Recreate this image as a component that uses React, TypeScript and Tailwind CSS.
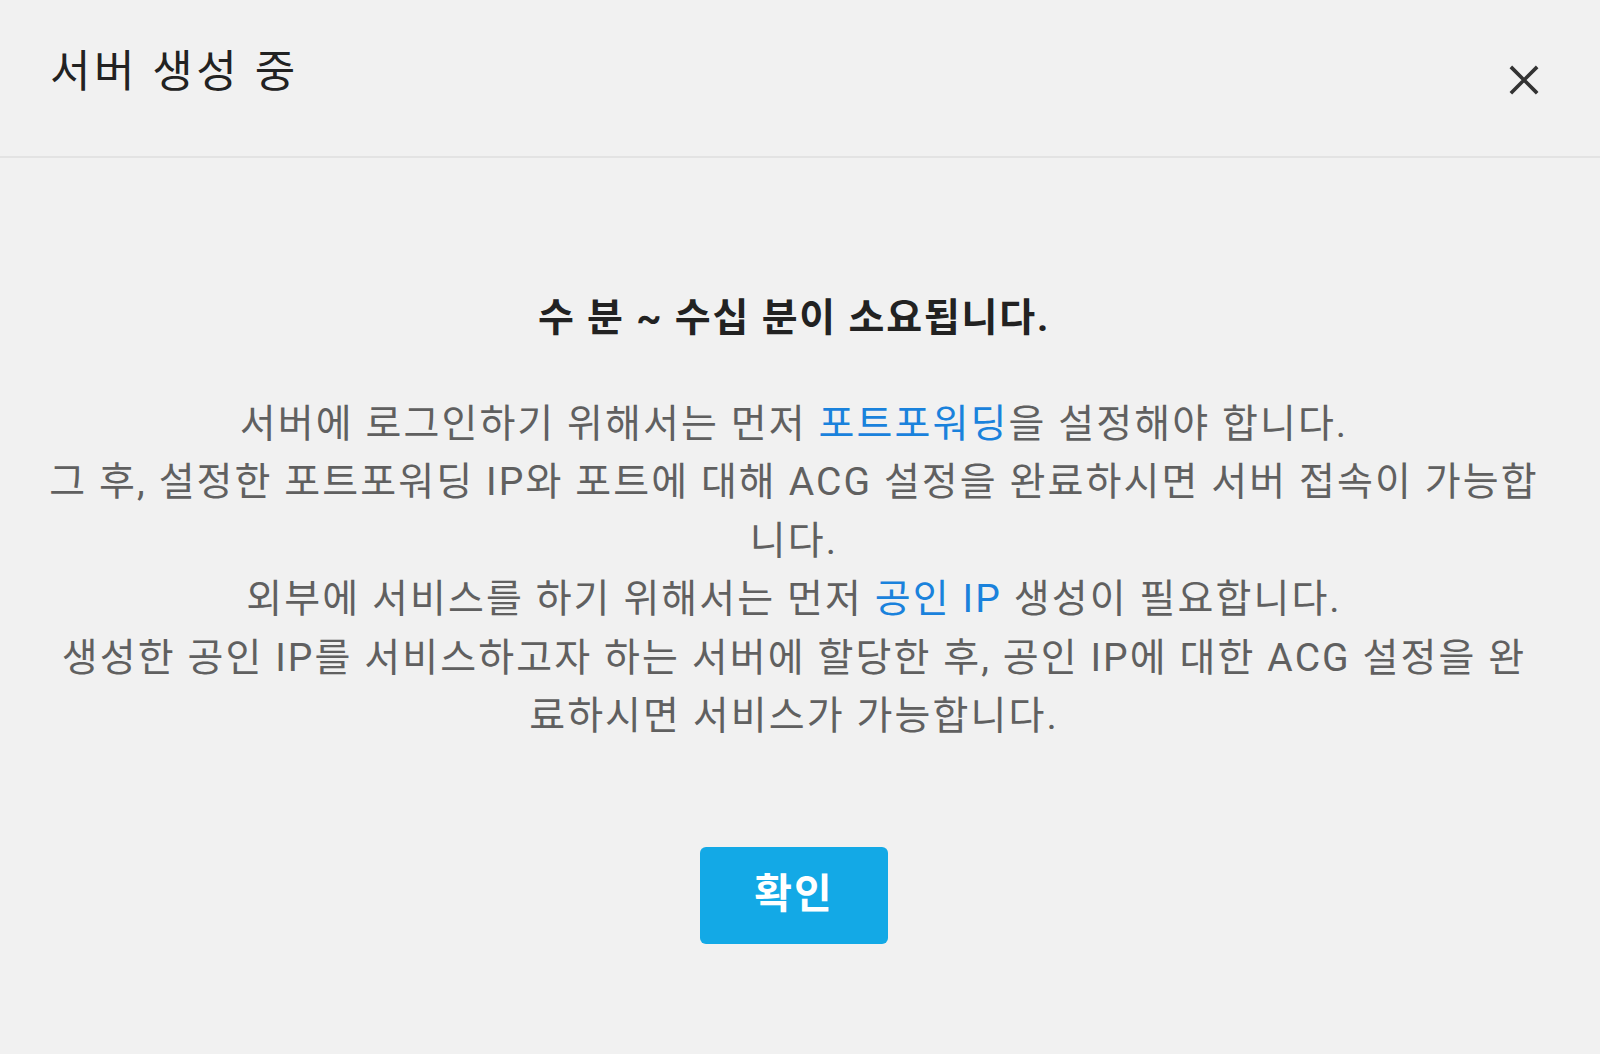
export default function App() {
  const font = { fontFamily: 'Roboto, "Noto Sans CJK KR", sans-serif' };
  return (
    <div className="min-h-[1054px] w-full bg-[#f1f1f1] text-[#555]" style={font}>
      <div className="flex h-[158px] items-start justify-between border-b-2 border-[#e3e3e3] pl-[50px] pr-[60px]">
        <h1 className="mt-[44px] text-[44px] leading-[56px] font-normal tracking-[3.5px] text-[#222]">서버 생성 중</h1>
        <button className="mt-[60px] h-[40px] w-[40px] -mr-[4px] flex items-center justify-center text-[#333]">
          <svg width="38" height="38" viewBox="0 0 24 24" fill="none" stroke="currentColor" strokeWidth="2.3" strokeLinecap="square">
            <path d="M4.5 4.5l15 15M19.5 4.5l-15 15" />
          </svg>
        </button>
      </div>
      <div className="flex flex-col items-center pl-[44px] pr-[56px] pt-[131px]">
        <p className="text-[39px] leading-[58.5px] font-bold tracking-[1.8px] text-[#222]">수 분 ~ 수십 분이 소요됩니다.</p>
        <div className="mt-[47px] text-center text-[39px] leading-[58.5px] tracking-[2.1px] text-[#606060]">
          <p>
            서버에 로그인하기 위해서는 먼저 <span className="text-[#1a82dc]">포트포워딩</span>을 설정해야 합니다.
          </p>
          <p>그 후, 설정한 포트포워딩 IP와 포트에 대해 ACG 설정을 완료하시면 서버 접속이 가능합니다.</p>
          <p>
            외부에 서비스를 하기 위해서는 먼저 <span className="text-[#1a82dc]">공인 IP</span> 생성이 필요합니다.
          </p>
          <p>생성한 공인 IP를 서비스하고자 하는 서버에 할당한 후, 공인 IP에 대한 ACG 설정을 완료하시면 서비스가 가능합니다.</p>
        </div>
        <button className="mt-[101px] h-[97px] w-[188px] rounded-[6px] bg-[#13a9e6] text-[41px] font-bold tracking-[2px] text-white">
          확인
        </button>
      </div>
    </div>
  );
}
